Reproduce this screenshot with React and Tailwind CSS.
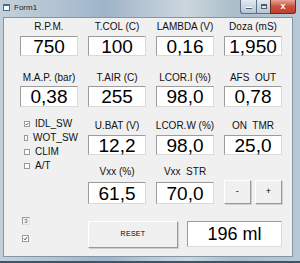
import React from "react";

const font = { fontFamily: '"Liberation Sans", Arial, sans-serif' };

const topRows = [
  [
    { label: "R.P.M.", value: "750" },
    { label: "T.COL (C)", value: "100" },
    { label: "LAMBDA (V)", value: "0,16" },
    { label: "Doza (mS)", value: "1,950" },
  ],
  [
    { label: "M.A.P. (bar)", value: "0,38" },
    { label: "T.AIR (C)", value: "255" },
    { label: "LCOR.I (%)", value: "98,0" },
    { label: "AFS  OUT", value: "0,78" },
  ],
];

const switches = [
  { name: "IDL_SW", on: true },
  { name: "WOT_SW", on: false },
  { name: "CLIM", on: false },
  { name: "A/T", on: false },
];

const ValueBox = ({ value, h = "h-[20px]" }) => (
  <div
    className={`w-full ${h} bg-white border border-t-[#9c9c9c] border-l-[#9c9c9c] border-r-[#dadada] border-b-[#dadada] flex items-center justify-center text-[19px] leading-none text-black`}
  >
    {value}
  </div>
);

const Field = ({ label, value, gap = "mt-[3px]", h }) => (
  <div className="flex flex-col items-center">
    <div className="h-[12px] leading-[12px] text-[10px] text-[#111] whitespace-pre">{label}</div>
    <div className={`w-full ${gap}`}>
      <ValueBox value={value} h={h} />
    </div>
  </div>
);

const Btn = ({ children, className }) => (
  <div
    className={`flex items-center justify-center bg-[#f0f0f0] border border-t-white border-l-white border-r-[#9a9a9a] border-b-[#9a9a9a] shadow-[1px_1px_0_#cfcfcf] text-black ${className}`}
  >
    {children}
  </div>
);

const TickBox = ({ on, size = "w-[6px] h-[6px]" }) => (
  <div className={`${size} bg-white border border-[#9a9a9a] flex items-center justify-center`}>
    {on && (
      <svg viewBox="0 0 8 8" className="w-full h-full">
        <path d="M1.5 4 L3.3 6 L6.8 1.8" stroke="#222" strokeWidth="1.4" fill="none" />
      </svg>
    )}
  </div>
);

export default function App() {
  return (
    <div
      className="w-[300px] h-[263px] flex flex-col overflow-hidden"
      style={{
        ...font,
        background:
          "linear-gradient(90deg, #c4d0da 0%, #b3c3d2 18%, #9fb4c9 35%, #b9c8d5 50%, #cdd6de 62%, #a9bfc9 78%, #b8c8d4 100%)",
      }}
    >
      {/* title bar */}
      <div className="h-[17px] flex items-start shrink-0">
        <div className="flex items-center h-[15px] pl-[3px]">
          <div className="w-[7px] h-[7px] bg-white border border-[#3f6f9f] border-t-2"></div>
          <span className="ml-[4px] text-[8px] leading-none text-[#1b1b1b]">Form1</span>
        </div>
        <div className="ml-auto mr-[4px] flex h-[14px]">
          <div className="w-[16px] h-full rounded-bl-[3px] border border-[#5d7286] border-r-0 border-t-0 bg-gradient-to-b from-[#e3eaf1] to-[#b5c5d4] flex items-end justify-center pb-[4px]">
            <div className="w-[6px] h-[2px] bg-white border-b border-[#50606e]"></div>
          </div>
          <div className="w-[14px] h-full border-b border-l border-[#5d7286] bg-gradient-to-b from-[#e3eaf1] to-[#b5c5d4] flex items-center justify-center">
            <div className="w-[6px] h-[5px] border border-[#50606e] border-t-2 bg-white/40"></div>
          </div>
          <div className="w-[26px] h-full rounded-br-[3px] border-b border-l border-r border-[#6b2a22] bg-gradient-to-b from-[#e5a397] via-[#c9503c] to-[#c0402c] flex items-center justify-center text-white text-[9px] font-bold leading-none">
            x
          </div>
        </div>
      </div>

      {/* client area */}
      <div className="ml-[3px] mr-[7px] h-[240px] bg-[#f0f0f0] border border-[#8396a6] shrink-0 pl-[16px] pt-[3px]">
        <div className="grid grid-cols-[58px_58px_58px_58px] gap-x-[10px]">
          {topRows[0].map((f) => (
            <Field key={f.label} label={f.label} value={f.value} />
          ))}
        </div>
        <div className="grid grid-cols-[58px_58px_58px_58px] gap-x-[10px] mt-[16px]">
          {topRows[1].map((f) => (
            <Field key={f.label} label={f.label} value={f.value} gap="mt-[2px]" h="h-[21px]" />
          ))}
        </div>

        <div className="flex gap-x-[10px]">
          {/* left column */}
          <div className="w-[58px] flex flex-col">
            <div className="mt-[10px] flex flex-col">
              {switches.map((s) => (
                <div key={s.name} className="h-[14px] flex items-center pl-[4px]">
                  <TickBox on={s.on} />
                  <span className="ml-[5px] text-[10px] leading-none text-[#111]">{s.name}</span>
                </div>
              ))}
            </div>
            <div className="mt-[44px] ml-[2px] w-[8px] h-[8px] border border-[#9a9a9a] border-r-[#e0e0e0] border-b-[#e0e0e0] flex items-center justify-center text-[6px] leading-none text-[#555]">
              3
            </div>
            <div className="mt-[10px] ml-[2px]">
              <TickBox on size="w-[7px] h-[7px]" />
            </div>
          </div>

          {/* right part */}
          <div className="flex flex-col">
            <div className="grid grid-cols-[58px_58px_58px] gap-x-[10px] mt-[13px]">
              <Field label="U.BAT (V)" value="12,2" />
              <Field label="LCOR.W (%)" value="98,0" />
              <Field label="ON  TMR" value="25,0" />
            </div>
            <div className="grid grid-cols-[58px_58px_58px] gap-x-[10px] mt-[11px]">
              <Field label="Vxx (%)" value="61,5" gap="mt-[4px]" h="h-[22px]" />
              <Field label="Vxx  STR" value="70,0" gap="mt-[4px]" h="h-[22px]" />
              <div className="flex items-end gap-x-[4px]">
                <Btn className="w-[27px] h-[24px] text-[9px]">-</Btn>
                <Btn className="w-[28px] h-[24px] text-[9px]">+</Btn>
              </div>
            </div>
            <div className="flex mt-[17px] gap-x-[9px]">
              <Btn className="w-[90px] h-[27px] text-[7px] tracking-[0.3px]">RESET</Btn>
              <div className="w-[95px] h-[26px] bg-white border border-t-[#9c9c9c] border-l-[#9c9c9c] border-r-[#dadada] border-b-[#dadada] flex items-center justify-center text-[18px] leading-none text-black">
                196 ml
              </div>
            </div>
          </div>
        </div>
      </div>

      {/* bottom frame */}
      <div className="flex-1 flex flex-col justify-end">
        <div className="h-[2px] bg-[#3d5566]"></div>
      </div>
    </div>
  );
}
